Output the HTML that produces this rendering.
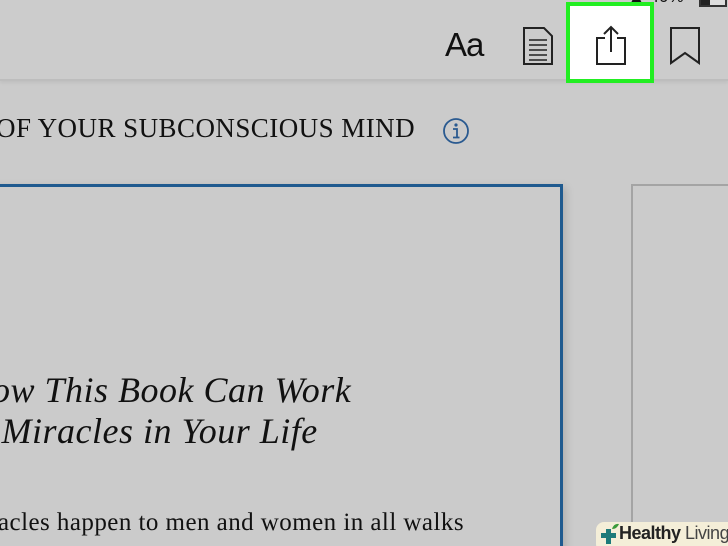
<!DOCTYPE html>
<html><head><meta charset="utf-8"><style>
html,body{margin:0;padding:0;width:728px;height:546px;overflow:hidden;background:#cbcbcb;position:relative;font-family:"Liberation Serif",serif}
.bar{position:absolute;left:0;top:0;width:728px;height:79px;background:#cccccc;border-bottom:2px solid #bdbdbd;box-shadow:0 2px 3px rgba(0,0,0,0.06)}
.abs{position:absolute}
</style></head><body>
<div class="bar"></div>
<div class="abs" style="left:628px;top:-13px;font-family:'Liberation Sans',sans-serif;font-size:17px;color:#111">▲ 40%</div>
<div class="abs" style="left:699px;top:-5px;width:24px;height:8px;border:2px solid #333;background:#ddd"></div>
<div class="abs" style="left:701px;top:-3px;width:9px;height:8px;background:#222"></div>
<div class="abs" style="left:445px;top:26px;font-family:'Liberation Sans',sans-serif;font-size:33px;color:#111;letter-spacing:-1px">Aa</div>
<svg class="abs" style="left:520px;top:26px" width="36" height="40" viewBox="0 0 36 40">
<path d="M4 2 H24 L32 10 V38 H4 Z" fill="none" stroke="#222" stroke-width="2"/>
<path d="M9 14H27M9 19H27M9 24H27M9 29H27M9 34H27" stroke="#222" stroke-width="1.6"/>
</svg>
<div class="abs" style="left:566px;top:2px;width:80px;height:73px;background:#fff;border:4px solid #22ee22"></div>
<svg class="abs" style="left:594px;top:24px" width="34" height="42" viewBox="0 0 34 42">
<path d="M11 14 H3 V40 H31 V14 H23" fill="none" stroke="#222" stroke-width="2"/>
<path d="M17 3 V28 M10 10 L17 3 L24 10" fill="none" stroke="#222" stroke-width="2"/>
</svg>
<svg class="abs" style="left:668px;top:26px" width="34" height="40" viewBox="0 0 34 40">
<path d="M3 2 H31 V37 L17 27 L3 37 Z" fill="none" stroke="#222" stroke-width="2"/>
</svg>
<div class="abs" style="left:-4px;top:113px;font-size:27px;color:#111;white-space:nowrap;letter-spacing:0.45px">OF YOUR SUBCONSCIOUS MIND</div>
<svg class="abs" style="left:442px;top:117px" width="28" height="28" viewBox="0 0 28 28">
<circle cx="14" cy="14" r="12" fill="none" stroke="#2a5a90" stroke-width="1.8"/>
<circle cx="14" cy="8" r="1.6" fill="#2a5a90"/>
<path d="M11 12H15V20M11 20.5H17.5" fill="none" stroke="#2a5a90" stroke-width="1.8"/>
</svg>
<div class="abs" style="left:-10px;top:184px;width:567px;height:380px;border:3px solid #1f5a8f;box-shadow:3px 3px 8px rgba(0,0,0,0.15)"></div>
<div class="abs" style="left:631px;top:184px;width:120px;height:380px;border:2px solid #a4a4a4"></div>
<div class="abs" style="left:-8px;top:370px;font-size:36px;font-style:italic;color:#111;white-space:nowrap;line-height:41px;letter-spacing:0.5px">ow This Book Can Work<br>&nbsp;Miracles in Your Life</div>
<div class="abs" style="left:-2px;top:509px;font-size:25px;color:#111;white-space:nowrap;letter-spacing:0.45px">acles happen to men and women in all walks</div>
<div class="abs" style="left:596px;top:522px;width:140px;height:30px;background:#f4eed8;border-radius:8px"></div>
<svg class="abs" style="left:598px;top:523px" width="22" height="22" viewBox="0 0 22 22">
<path d="M8 6H13V10H18V15H13V21H8V15H3V10H8Z" fill="#1d7a7a"/>
<path d="M14 6 Q16 0 21 1 Q19 6 14 6Z" fill="#3a9a3a"/>
</svg>
<div class="abs" style="left:619px;top:523px;font-family:'Liberation Sans',sans-serif;font-size:18px;color:#222;white-space:nowrap;letter-spacing:-0.5px"><b>Healthy</b> <span style="color:#444">Living</span></div>
</body></html>
